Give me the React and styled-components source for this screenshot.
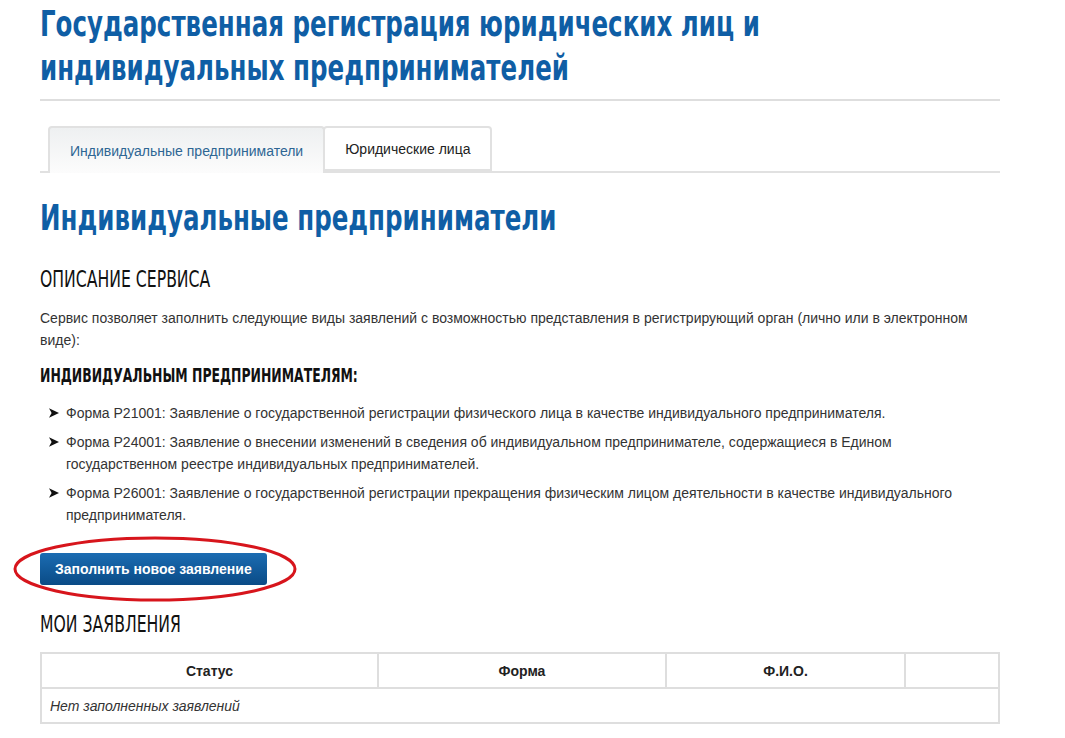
import React from 'react';
import styled, { createGlobalStyle } from 'styled-components';

const GlobalStyle = createGlobalStyle`
  body {
    margin: 0;
    background: #fff;
    font-family: "Liberation Sans", Arial, sans-serif;
    color: #333;
  }
`;

const narrow = `"DejaVu Sans Condensed", "DejaVu Sans", sans-serif`;

const Page = styled.div`
  width: 960px;
  padding: 0 0 0 40px;
`;

// the reference uses a condensed DIN-like face; squeeze DejaVu to match
const Condensed = styled.div`
  font-family: ${narrow};
  white-space: nowrap;
  transform: scaleX(${p => p.$sx || 0.757});
  transform-origin: left top;
`;

const Title = styled(Condensed).attrs({ as: 'h1' })`
  margin: 0;
  padding-top: 2px;
  font-weight: 700;
  font-size: 36px;
  line-height: 44px;
  color: #0f5ea5;
`;

const Rule = styled.div`
  height: 2px;
  background: #dedede;
  margin-top: 9px;
`;

const TabBar = styled.div`
  display: flex;
  margin-top: 25px;
  padding-left: 8px;
  border-bottom: 2px solid #e1e1e1;
  height: 45px;
`;

const Tab = styled.div`
  display: flex;
  align-items: center;
  padding: 0 20px;
  height: ${p => (p.$active ? '47px' : '45px')};
  box-sizing: border-box;
  font-size: 14px;
  border: 2px solid #e1e1e1;
  border-bottom: ${p => (p.$active ? 'none' : '2px solid #e1e1e1')};
  border-radius: 4px 4px 0 0;
  margin-left: ${p => (p.$active ? '0' : '-2px')};
  color: ${p => (p.$active ? '#2e6694' : '#222')};
  background: ${p => (p.$active ? 'linear-gradient(#eef0f1, #fcfcfc)' : '#fff')};
  position: relative;
  z-index: ${p => (p.$active ? 1 : 0)};
`;

const Heading = styled(Condensed).attrs({ as: 'h2' })`
  margin: 23px 0 0;
  font-weight: 700;
  font-size: 36px;
  line-height: 44px;
  color: #0f5ea5;
`;

const Section = styled(Condensed).attrs({ as: 'h3' })`
  margin: ${p => p.$top || '20px'} 0 0;
  font-weight: ${p => (p.$bold ? 700 : 400)};
  font-size: ${p => (p.$bold ? '20px' : '23px')};
  line-height: 26px;
  color: #111;
  text-transform: uppercase;
`;

const Text = styled.p`
  margin: 15px 0 0;
  font-size: 14px;
  line-height: 22px;
  color: #333;
  padding-right: 20px;
`;

const List = styled.ul`
  list-style: none;
  margin: 14px 0 0;
  padding: 0 0 0 8px;
`;

const Item = styled.li`
  display: flex;
  gap: 6px;
  font-size: 14px;
  line-height: 22px;
  color: #333;
  margin-bottom: 7px;
  padding-right: 40px;
`;

const Arrow = styled.svg`
  flex: none;
  width: 12px;
  height: 12px;
  margin-top: 5px;
`;

const ButtonWrap = styled.div`
  position: relative;
  display: inline-block;
  margin-top: 20px;
`;

const Button = styled.button`
  display: block;
  height: 32px;
  padding: 0 15px;
  border: none;
  border-radius: 3px;
  background: linear-gradient(#1b6cb2, #0a4b86);
  color: #fff;
  font-family: "Liberation Sans", Arial, sans-serif;
  font-weight: 700;
  font-size: 14px;
`;

const Ring = styled.svg`
  position: absolute;
  left: -27px;
  top: -17px;
  width: 284px;
  height: 66px;
  pointer-events: none;
`;

const Table = styled.table`
  width: 960px;
  margin-top: 15px;
  border-collapse: collapse;
  font-size: 14px;
  color: #222;
`;

const Th = styled.th`
  height: 33px;
  border: 2px solid #dedede;
  font-weight: 700;
  text-align: center;
  width: ${p => p.$w};
  padding: 0;
`;

const Td = styled.td`
  height: 33px;
  border: 2px solid #dedede;
  padding: 0 8px;
  font-style: italic;
  color: #333;
`;

const ArrowIcon = () => (
  <Arrow viewBox="0 0 12 12">
    <path d="M1 1.2 L11 6 L1 10.8 L3.6 6 Z" fill="#111" />
  </Arrow>
);

const forms = [
  'Форма Р21001: Заявление о государственной регистрации физического лица в качестве индивидуального предпринимателя.',
  'Форма Р24001: Заявление о внесении изменений в сведения об индивидуальном предпринимателе, содержащиеся в Едином государственном реестре индивидуальных предпринимателей.',
  'Форма Р26001: Заявление о государственной регистрации прекращения физическим лицом деятельности в качестве индивидуального предпринимателя.',
];

export default function App() {
  return (
    <Page>
      <GlobalStyle />
      <Title>
        Государственная регистрация юридических лиц и
        <br />
        индивидуальных предпринимателей
      </Title>
      <Rule />
      <TabBar>
        <Tab $active>Индивидуальные предприниматели</Tab>
        <Tab>Юридические лица</Tab>
      </TabBar>

      <Heading>Индивидуальные предприниматели</Heading>
      <Section $top="26px">Описание сервиса</Section>
      <Text>
        Сервис позволяет заполнить следующие виды заявлений с возможностью представления в регистрирующий орган (лично или в электронном виде):
      </Text>
      <Section $bold $sx={0.69} $top="11px">Индивидуальным предпринимателям:</Section>
      <List>
        {forms.map(f => (
          <Item key={f}>
            <ArrowIcon />
            <span>{f}</span>
          </Item>
        ))}
      </List>

      <ButtonWrap>
        <Button>Заполнить новое заявление</Button>
        <Ring viewBox="0 0 284 66">
          <ellipse cx="142" cy="33" rx="140" ry="31" fill="none" stroke="#d7151c" strokeWidth="3" />
        </Ring>
      </ButtonWrap>

      <Section $top="26px">Мои заявления</Section>
      <Table>
        <thead>
          <tr>
            <Th $w="335px">Статус</Th>
            <Th $w="286px">Форма</Th>
            <Th $w="237px">Ф.И.О.</Th>
            <Th />
          </tr>
        </thead>
        <tbody>
          <tr>
            <Td colSpan={4}>Нет заполненных заявлений</Td>
          </tr>
        </tbody>
      </Table>
    </Page>
  );
}
